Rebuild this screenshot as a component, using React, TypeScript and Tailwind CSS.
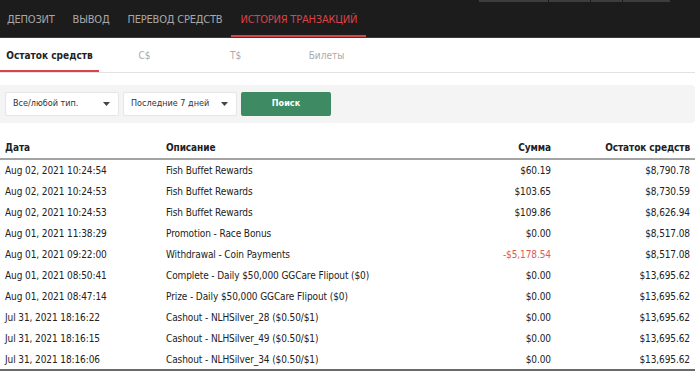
import React from 'react'

const font = { fontFamily: '"DejaVu Sans Condensed", "DejaVu Sans", sans-serif', fontStretch: 'condensed' }

const navItems = ['ДЕПОЗИТ', 'ВЫВОД', 'ПЕРЕВОД СРЕДСТВ', 'ИСТОРИЯ ТРАНЗАКЦИЙ']

const subTabs = [
    { label: 'Остаток средств', width: 'w-[99px]' },
    { label: 'C$', width: 'w-[91px]' },
    { label: 'T$', width: 'w-[91px]' },
    { label: 'Билеты', width: 'w-[91px]' },
]

const rows = [
    ['Aug 02, 2021 10:24:54', 'Fish Buffet Rewards', '$60.19', '$8,790.78'],
    ['Aug 02, 2021 10:24:53', 'Fish Buffet Rewards', '$103.65', '$8,730.59'],
    ['Aug 02, 2021 10:24:53', 'Fish Buffet Rewards', '$109.86', '$8,626.94'],
    ['Aug 01, 2021 11:38:29', 'Promotion - Race Bonus', '$0.00', '$8,517.08'],
    ['Aug 01, 2021 09:22:00', 'Withdrawal - Coin Payments', '-$5,178.54', '$8,517.08'],
    ['Aug 01, 2021 08:50:41', 'Complete - Daily $50,000 GGCare Flipout ($0)', '$0.00', '$13,695.62'],
    ['Aug 01, 2021 08:47:14', 'Prize - Daily $50,000 GGCare Flipout ($0)', '$0.00', '$13,695.62'],
    ['Jul 31, 2021 18:16:22', 'Cashout - NLHSilver_28 ($0.50/$1)', '$0.00', '$13,695.62'],
    ['Jul 31, 2021 18:16:15', 'Cashout - NLHSilver_49 ($0.50/$1)', '$0.00', '$13,695.62'],
    ['Jul 31, 2021 18:16:06', 'Cashout - NLHSilver_34 ($0.50/$1)', '$0.00', '$13,695.62'],
]

function Select({ label }: { label: string }) {
    return (
        <div className="flex h-[24px] w-[114px] items-center justify-between rounded-[2px] border border-[#e6e6e6] bg-white pl-[7px] pr-[8px] text-[9px] text-[#333]">
            <span>{label}</span>
            <svg width="7" height="4" viewBox="0 0 7 4">
                <path d="M0 0h7L3.5 4z" fill="#444" />
            </svg>
        </div>
    )
}

export default function App() {
    return (
        <div className="h-[372px] w-[700px] overflow-hidden bg-white" style={font}>
            <div className="h-[38px] border-b border-[#3a3a3a] bg-[#1c1c1c]">
                <div className="flex h-[2px] pl-[479px]">
                    <div className="w-[69px] bg-[#3d3d3d]" />
                    <div className="ml-px w-[41px] bg-[#3d3d3d]" />
                    <div className="ml-px w-[31px] bg-[#3d3d3d]" />
                    <div className="ml-px w-[47px] bg-[#3d3d3d]" />
                </div>
                <nav className="-ml-[2px] flex h-[35px]">
                    {navItems.map((item, i) => (
                        <div
                            key={item}
                            className={
                                i === 3
                                    ? 'flex items-center border-b-[2px] border-[#d9434b] px-[9px] pt-[3px] text-[11px] tracking-[-0.2px] text-[#d9434b]'
                                    : 'flex items-center border-b-[2px] border-transparent px-[9px] pt-[3px] text-[11px] tracking-[-0.2px] text-[#a8a8a8]'
                            }
                        >
                            {item}
                        </div>
                    ))}
                </nav>
            </div>

            <div className="flex h-[35px] w-[695px] border-b border-[#e2e2e2]">
                {subTabs.map((tab, i) => (
                    <div
                        key={tab.label}
                        className={
                            i === 0
                                ? `${tab.width} flex items-end justify-center border-b-[2px] border-[#d9434b] pb-[7px] text-[10px] font-bold text-[#222]`
                                : `${tab.width} flex items-end justify-center border-b-[2px] border-transparent pb-[7px] text-[10px] text-[#aaa]`
                        }
                    >
                        {tab.label}
                    </div>
                ))}
            </div>

            <div className="mt-[12px] flex h-[38px] w-[695px] items-center gap-[4px] rounded-r-[4px] bg-[#f4f4f4] pl-[5px]">
                <Select label="Все/любой тип." />
                <Select label="Последние 7 дней" />
                <button className="h-[24px] w-[90px] rounded-[2px] bg-[#3e8b63] text-[9px] font-bold text-white">
                    Поиск
                </button>
            </div>

            <table className="mt-[17px] w-[695px] border-b-[2px] border-[#6a6a6a] text-[10px] tracking-[-0.1px] text-[#222]">
                <thead>
                    <tr className="h-[19px] border-b-[2px] border-[#a3a3a3] font-bold">
                        <th className="pl-[5px] text-left align-top font-bold">Дата</th>
                        <th className="text-left align-top font-bold">Описание</th>
                        <th className="text-right align-top font-bold">Сумма</th>
                        <th className="pr-[5px] text-right align-top font-bold">Остаток средств</th>
                    </tr>
                </thead>
                <tbody>
                    {rows.map((r, i) => (
                        <tr key={i} className="h-[21.1px]">
                            <td className="w-[166px] pl-[5px] pt-[1px]">{r[0]}</td>
                            <td className="pt-[1px]">{r[1]}</td>
                            <td className={r[2].startsWith('-') ? 'pt-[1px] text-right text-[#dc5a5c]' : 'pt-[1px] text-right'}>{r[2]}</td>
                            <td className="w-[144px] pr-[5px] pt-[1px] text-right">{r[3]}</td>
                        </tr>
                    ))}
                </tbody>
            </table>
        </div>
    )
}
